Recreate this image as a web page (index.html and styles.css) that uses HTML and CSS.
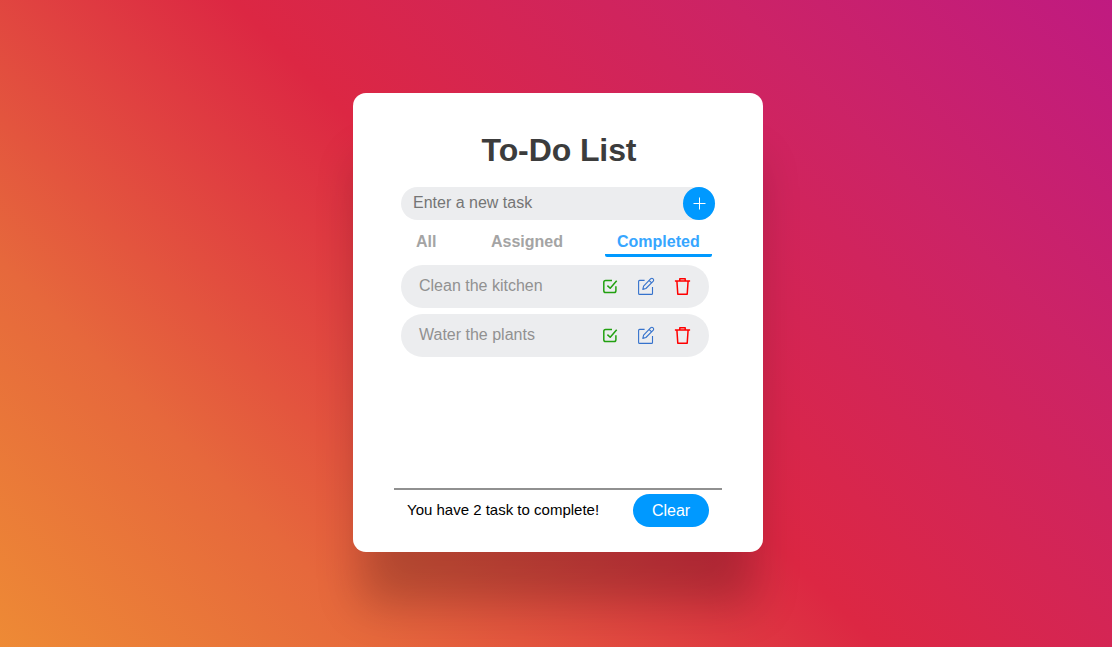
FILE: index.html
```html
<!DOCTYPE html>
<html lang="en">
<head>
<meta charset="utf-8">
<title>To-Do List</title>
<link rel="stylesheet" href="styles.css">
</head>
<body>
<svg class="sprite" aria-hidden="true">
  <symbol id="check" viewBox="0 0 20 20">
    <path d="M12 4.4H5.6Q3.8 4.4 3.8 6.2V14.7Q3.8 16.5 5.6 16.5H14.1Q15.9 16.5 15.9 14.7V10.2" stroke-width="1.5"/>
    <path d="M7.4 9.6 10.2 12.2 16.7 4.8" stroke-width="1.5"/>
  </symbol>
  <symbol id="edit" viewBox="0 0 20 20">
    <path d="M8.6 4.4H3.6Q2.6 4.4 2.6 5.4V17.4Q2.6 18.4 3.6 18.4H15.5Q16.5 18.4 16.5 17.4V11"/>
    <path d="M6.8 13.4 7.6 10.2 14.8 2.7Q16 1.8 17.1 2.9 18.2 4 17.3 5.2L9.9 12.5ZM13.2 4.5 15.6 6.8"/>
  </symbol>
  <symbol id="trash" viewBox="0 0 20 20">
    <path d="M2.9 5H18.1M7.8 5V2.7H13.2V5M4.9 5 5.8 18.3H15.2L16.1 5" stroke-width="1.5"/>
  </symbol>
</svg>
<main class="card">
  <h1 class="title">To-Do List</h1>
  <form class="entry">
    <input class="field" type="text" placeholder="Enter a new task">
    <button class="add" type="button" aria-label="Add task"><svg class="plus" viewBox="0 0 13 13"><path d="M6.5 0.5V12.5M0.5 6.5H12.5"/></svg></button>
  </form>
  <nav class="tabs">
    <span class="tab all">All</span>
    <span class="tab assigned">Assigned</span>
    <span class="tab active">Completed</span>
  </nav>
  <ul class="tasks">
    <li class="task"><span class="name">Clean the kitchen</span>
      <svg class="icon green"><use href="#check"/></svg><svg class="icon blue"><use href="#edit"/></svg><svg class="icon red"><use href="#trash"/></svg></li>
    <li class="task"><span class="name">Water the plants</span>
      <svg class="icon green"><use href="#check"/></svg><svg class="icon blue"><use href="#edit"/></svg><svg class="icon red"><use href="#trash"/></svg></li>
  </ul>
  <footer class="footer">
    <span class="status">You have 2 task to complete!</span>
    <button class="clear" type="button">Clear</button>
  </footer>
</main>
</body>
</html>
```
FILE: styles.css
```css
* { box-sizing: border-box; }
body {
  margin: 0;
  height: 647px;
  padding: 93px 0 0 353px;
  overflow: hidden;
  font-family: "Liberation Sans", Arial, sans-serif;
  font-size: 16px;
  background: linear-gradient(45deg, #f09433 -6.3%, #e6683c 21.9%, #dc2743 50%, #cc2366 78.1%, #bc1888 106.3%);
}
.sprite { display: none; }
.card {
  display: flex;
  flex-direction: column;
  width: 410px;
  height: 459px;
  padding: 39px 41px 25px;
  border-radius: 13px;
  background: #fff;
  box-shadow: 0 60px 45px -8px rgba(0, 0, 0, .22);
}
.title {
  margin: 0 0 18px;
  padding-left: 2px;
  text-align: center;
  font-size: 32px;
  line-height: 37px;
  letter-spacing: -.1px;
  color: #3c3c3c;
}
.entry {
  display: flex;
  width: 314px;
  height: 33px;
  margin-left: 7px;
  border-radius: 17px;
  background: #ecedef;
}
.field {
  flex: 1;
  min-width: 0;
  padding: 0 12px 2px;
  border: 0;
  background: transparent;
  font: inherit;
}
.field::placeholder { color: #757575; }
.add {
  display: grid;
  place-items: center;
  width: 32px;
  height: 33px;
  padding: 0;
  border: 0;
  border-radius: 50%;
  background: #0099ff;
}
.plus { width: 13px; height: 13px; margin-left: 1px; stroke: #fff; stroke-width: 1; fill: none; }
.tabs {
  display: flex;
  height: 37px;
  padding-left: 22px;
  font-weight: bold;
  line-height: 18px;
  color: #a4a4a4;
}
.tab { padding-top: 13px; }
.all { width: 75px; }
.assigned { width: 114px; }
.active {
  width: 107px;
  padding-left: 12px;
  color: #36a6ff;
  background: linear-gradient(#0099ff, #0099ff) bottom / 100% 3px no-repeat;
  border-radius: 2px;
}
.tasks {
  display: flex;
  flex-direction: column;
  flex: 1;
  gap: 6px;
  margin: 8px 0 0 7px;
  padding: 0;
  list-style: none;
}
.task {
  display: flex;
  align-items: center;
  width: 308px;
  height: 43px;
  padding: 0 17px 0 18px;
  gap: 16px;
  border-radius: 22px;
  background: #ecedef;
}
.name { flex: 1; padding-bottom: 2px; color: #919191; }
.icon { width: 20px; height: 20px; margin-bottom: 1px; fill: none; stroke: currentColor; stroke-width: 1.1; stroke-linejoin: round; }
.green { color: #22a010; }
.blue { color: #3572cc; }
.red { color: #ff0000; }
.footer {
  display: flex;
  justify-content: space-between;
  height: 39px;
  padding: 4px 13px 0;
  border-top: 2px solid #909090;
}
.status { font-size: 15px; line-height: 32px; color: #000; }
.clear {
  width: 76px;
  height: 33px;
  padding: 0;
  border: 0;
  border-radius: 17px;
  background: #0099ff;
  color: #fff;
  font: inherit;
}
```
